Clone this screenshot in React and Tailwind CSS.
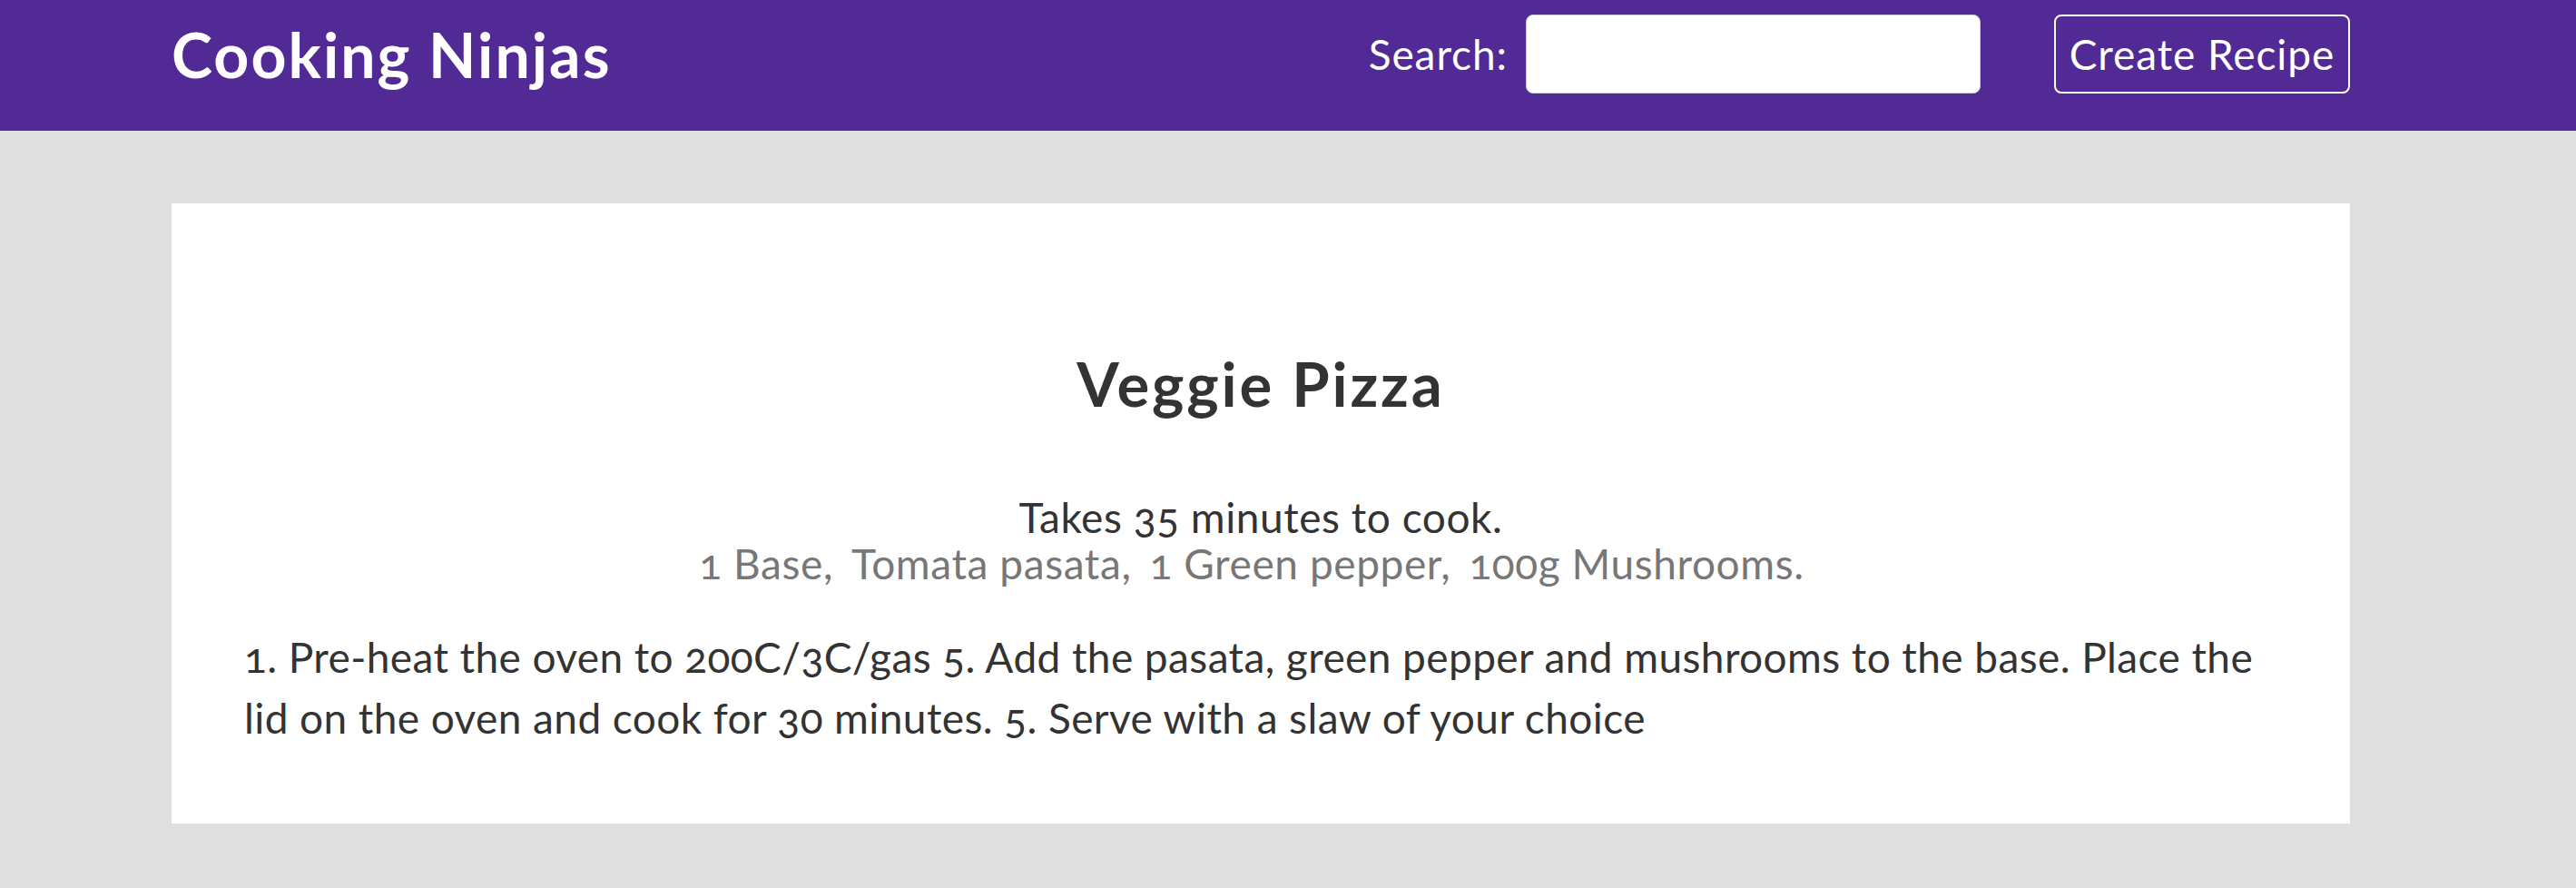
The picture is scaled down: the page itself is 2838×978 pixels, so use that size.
import { useState } from 'react'

const recipe = {
  title: 'Veggie Pizza',
  cookingTime: '35 minutes',
  ingredients: ['1 Base', 'Tomata pasata', '1 Green pepper', '100g Mushrooms'],
  method:
    '1. Pre-heat the oven to 200C/3C/gas 5. Add the pasata, green pepper and mushrooms to the base. Place the lid on the oven and cook for 30 minutes. 5. Serve with a slaw of your choice'
}

function Navbar() {
  const [term, setTerm] = useState('')

  return (
    <div className="h-[144px] bg-[#522a95] pt-[16px] text-white">
      <nav className="ml-[189px] flex h-[87px] w-[2400px] items-center">
        <h1 className="mr-auto text-[68px] font-bold leading-[80px] tracking-[0.03em]">Cooking Ninjas</h1>
        <div className="flex items-center">
          <label htmlFor="search" className="mr-[20px] text-[46px] leading-[56px] tracking-[0.02em]">
            Search:
          </label>
          <input
            id="search"
            type="text"
            value={term}
            onChange={(e) => setTerm(e.target.value)}
            className="h-[87px] w-[501px] rounded-[8px] border border-[#cfcfcf] bg-white px-3 text-[40px] text-[#333] outline-none"
          />
        </div>
        <a
          href="#"
          className="ml-[81px] flex h-[87px] w-[326px] items-center justify-center rounded-[8px] border-2 border-white text-[46px] leading-[56px] tracking-[0.02em]"
        >
          Create Recipe
        </a>
      </nav>
    </div>
  )
}

export default function App() {
  return (
    <div
      className="min-h-[978px] bg-[#dfdfdf] text-[#333] oldstyle-nums"
      style={{ fontFamily: 'Lato, "Open Sans", sans-serif' }}
    >
      <Navbar />
      <div className="ml-[189px] mt-[80px] w-[2400px] bg-white px-[80px] pt-[80px] pb-[83px] text-center">
        <h2 className="mt-[78px] text-[67px] font-bold leading-[80px] tracking-[0.043em]">{recipe.title}</h2>
        <p className="mt-[82px] text-[46px] leading-[51px] tracking-[0.012em]">
          Takes {recipe.cookingTime} to cook.
        </p>
        <ul className="flex justify-center text-[46px] leading-[51px] tracking-[0.013em] text-[#777]">
          {recipe.ingredients.map((ing, i) => (
            <li key={ing} className="mr-[20px]">
              {ing}
              {i === recipe.ingredients.length - 1 ? '.' : ','}
            </li>
          ))}
        </ul>
        <p className="mt-[44px] text-left text-[46px] leading-[67px] tracking-[0.009em]">{recipe.method}</p>
      </div>
    </div>
  )
}
